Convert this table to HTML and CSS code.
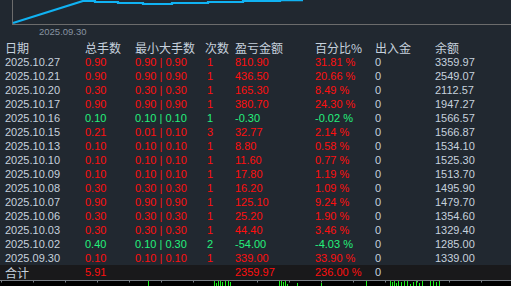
FILE: index.html
```html
<!DOCTYPE html>
<html>
<head>
<meta charset="utf-8">
<link rel="stylesheet" href="styles.css">
</head>
<body>
<div class="panel">
  <div class="chart">
    <svg class="chart-svg" width="511" height="25" viewBox="0 0 511 25">
      <line x1="12.5" y1="0" x2="12.5" y2="24.5" stroke="#6c6c6c" stroke-width="1"/>
      <line x1="12" y1="24.5" x2="511" y2="24.5" stroke="#6c6c6c" stroke-width="1"/>
      <polyline fill="none" stroke="#10b2f2" stroke-width="2.2" points="13,23 83,1 95,1 95,2 118,2 118,3 143,3 143,4 172,4 172,3 208,3 208,2 243,2 243,1 280,1 280,0.2 303,0.2"/>
    </svg>
    <div class="chart-label">2025.09.30</div>
  </div>

  <div class="table">
    <div class="row head">
      <span>日期</span><span>总手数</span><span>最小大手数</span><span>次数</span><span>盈亏金额</span><span>百分比%</span><span>出入金</span><span>余额</span>
    </div>
    <div class="row red"><span class="c-date">2025.10.27</span><span>0.90</span><span>0.90 | 0.90</span><span class="c-n">1</span><span>810.90</span><span>31.81 %</span><span class="c-lt">0</span><span class="c-lt">3359.97</span></div>
    <div class="row red"><span class="c-date">2025.10.21</span><span>0.90</span><span>0.90 | 0.90</span><span class="c-n">1</span><span>436.50</span><span>20.66 %</span><span class="c-lt">0</span><span class="c-lt">2549.07</span></div>
    <div class="row red"><span class="c-date">2025.10.20</span><span>0.30</span><span>0.30 | 0.30</span><span class="c-n">1</span><span>165.30</span><span>8.49 %</span><span class="c-lt">0</span><span class="c-lt">2112.57</span></div>
    <div class="row red"><span class="c-date">2025.10.17</span><span>0.90</span><span>0.90 | 0.90</span><span class="c-n">1</span><span>380.70</span><span>24.30 %</span><span class="c-lt">0</span><span class="c-lt">1947.27</span></div>
    <div class="row green"><span class="c-date">2025.10.16</span><span>0.10</span><span>0.10 | 0.10</span><span class="c-n">1</span><span>-0.30</span><span>-0.02 %</span><span class="c-lt">0</span><span class="c-lt">1566.57</span></div>
    <div class="row red"><span class="c-date">2025.10.15</span><span>0.21</span><span>0.01 | 0.10</span><span class="c-n">3</span><span>32.77</span><span>2.14 %</span><span class="c-lt">0</span><span class="c-lt">1566.87</span></div>
    <div class="row red"><span class="c-date">2025.10.13</span><span>0.10</span><span>0.10 | 0.10</span><span class="c-n">1</span><span>8.80</span><span>0.58 %</span><span class="c-lt">0</span><span class="c-lt">1534.10</span></div>
    <div class="row red"><span class="c-date">2025.10.10</span><span>0.10</span><span>0.10 | 0.10</span><span class="c-n">1</span><span>11.60</span><span>0.77 %</span><span class="c-lt">0</span><span class="c-lt">1525.30</span></div>
    <div class="row red"><span class="c-date">2025.10.09</span><span>0.10</span><span>0.10 | 0.10</span><span class="c-n">1</span><span>17.80</span><span>1.19 %</span><span class="c-lt">0</span><span class="c-lt">1513.70</span></div>
    <div class="row red"><span class="c-date">2025.10.08</span><span>0.30</span><span>0.30 | 0.30</span><span class="c-n">1</span><span>16.20</span><span>1.09 %</span><span class="c-lt">0</span><span class="c-lt">1495.90</span></div>
    <div class="row red"><span class="c-date">2025.10.07</span><span>0.90</span><span>0.90 | 0.90</span><span class="c-n">1</span><span>125.10</span><span>9.24 %</span><span class="c-lt">0</span><span class="c-lt">1479.70</span></div>
    <div class="row red"><span class="c-date">2025.10.06</span><span>0.30</span><span>0.30 | 0.30</span><span class="c-n">1</span><span>25.20</span><span>1.90 %</span><span class="c-lt">0</span><span class="c-lt">1354.60</span></div>
    <div class="row red"><span class="c-date">2025.10.03</span><span>0.30</span><span>0.30 | 0.30</span><span class="c-n">1</span><span>44.40</span><span>3.46 %</span><span class="c-lt">0</span><span class="c-lt">1329.40</span></div>
    <div class="row green"><span class="c-date">2025.10.02</span><span>0.40</span><span>0.10 | 0.30</span><span class="c-n">2</span><span>-54.00</span><span>-4.03 %</span><span class="c-lt">0</span><span class="c-lt">1285.00</span></div>
    <div class="row red"><span class="c-date">2025.09.30</span><span>0.10</span><span>0.10 | 0.10</span><span class="c-n">1</span><span>339.00</span><span>33.90 %</span><span class="c-lt">0</span><span class="c-lt">1339.00</span></div>
    <div class="row red total"><span class="c-date c-cjk">合计</span><span>5.91</span><span></span><span></span><span>2359.97</span><span>236.00 %</span><span class="c-lt">0</span><span></span></div>
  </div>

  <svg class="strip" width="511" height="7" viewBox="0 0 511 7">
    <rect x="0" y="0" width="511" height="7" fill="#000"/>
    <line x1="0" y1="0.5" x2="511" y2="0.5" stroke="#7a7f86" stroke-width="1"/>
    <g stroke="#7a7f86" stroke-width="1">
      <line x1="1.5" y1="1" x2="1.5" y2="2.5"/><line x1="33.5" y1="1" x2="33.5" y2="2.5"/><line x1="65.5" y1="1" x2="65.5" y2="2.5"/><line x1="97.5" y1="1" x2="97.5" y2="2.5"/><line x1="129.5" y1="1" x2="129.5" y2="2.5"/><line x1="161.5" y1="1" x2="161.5" y2="2.5"/><line x1="193.5" y1="1" x2="193.5" y2="2.5"/><line x1="225.5" y1="1" x2="225.5" y2="2.5"/><line x1="257.5" y1="1" x2="257.5" y2="2.5"/><line x1="289.5" y1="1" x2="289.5" y2="2.5"/><line x1="321.5" y1="1" x2="321.5" y2="2.5"/><line x1="353.5" y1="1" x2="353.5" y2="2.5"/><line x1="385.5" y1="1" x2="385.5" y2="2.5"/><line x1="417.5" y1="1" x2="417.5" y2="2.5"/><line x1="449.5" y1="1" x2="449.5" y2="2.5"/><line x1="481.5" y1="1" x2="481.5" y2="2.5"/>
    </g>
    <g fill="#1aee1a">
      <rect x="148" y="1" width="1" height="6"/>
      <rect x="214" y="1" width="1" height="6"/><rect x="216" y="3" width="1" height="4"/><rect x="218" y="1" width="1" height="6"/><rect x="220" y="1" width="1" height="6"/><rect x="222" y="2" width="1" height="5"/><rect x="225" y="1" width="1" height="6"/><rect x="228" y="1" width="1" height="6"/><rect x="230" y="2" width="1" height="5"/>
      <rect x="279" y="1" width="1" height="6"/><rect x="281" y="1" width="1" height="6"/><rect x="283" y="2" width="1" height="5"/><rect x="285" y="1" width="1" height="6"/><rect x="287" y="4" width="1" height="3"/>
      <rect x="297" y="3" width="1" height="4"/><rect x="321" y="3" width="1" height="4"/>
      <rect x="366" y="1" width="1" height="6"/>
      <rect x="390" y="1" width="1" height="6"/><rect x="392" y="2" width="1" height="5"/><rect x="394" y="1" width="1" height="6"/><rect x="396" y="3" width="1" height="4"/><rect x="398" y="1" width="1" height="6"/><rect x="401" y="2" width="1" height="5"/><rect x="404" y="1" width="1" height="6"/><rect x="407" y="1" width="1" height="6"/><rect x="410" y="4" width="1" height="3"/><rect x="413" y="2" width="1" height="5"/><rect x="416" y="1" width="1" height="6"/><rect x="419" y="3" width="1" height="4"/><rect x="422" y="1" width="1" height="6"/>
      <rect x="430" y="1" width="1" height="6"/><rect x="433" y="1" width="1" height="6"/><rect x="436" y="2" width="1" height="5"/><rect x="439" y="1" width="1" height="6"/>
    </g>
  </svg>
</div>
</body>
</html>
```

FILE: styles.css
```css
html, body {
  margin: 0;
  padding: 0;
  background: #212830;
}

body {
  width: 511px;
  height: 286px;
  overflow: hidden;
  font-family: "Liberation Sans", "Noto Sans CJK SC", sans-serif;
  color: #c6d1dd;
}

.panel {
  display: flex;
  flex-direction: column;
}

.chart {
  display: flex;
  flex-direction: column;
  height: 41px;
}

.chart-svg {
  display: block;
}

.chart-label {
  padding-left: 39px;
  font-size: 9.5px;
  line-height: 13px;
  color: #8793a1;
}

.table {
  display: flex;
  flex-direction: column;
}

.row {
  display: grid;
  grid-template-columns: 80px 50px 70px 30px 80px 60px 60px 1fr;
  height: 14px;
  line-height: 14px;
  padding-left: 5px;
  font-size: 11px;
  white-space: nowrap;
}

.row.head {
  font-family: "Noto Sans CJK SC", "Liberation Sans", sans-serif;
  font-size: 12px;
  color: #c6d1dd;
}

.row.red {
  color: #ff0f0f;
}

.row.green {
  color: #24f07c;
}

.row .c-date,
.row .c-lt {
  color: #c6d1dd;
}

.row .c-n {
  padding-left: 2px;
}

.row .c-cjk {
  font-family: "Noto Sans CJK SC", sans-serif;
  font-size: 12px;
}

.row.total {
  background: #19191b;
  height: 15px;
  line-height: 15px;
}

.strip {
  display: block;
}
```
